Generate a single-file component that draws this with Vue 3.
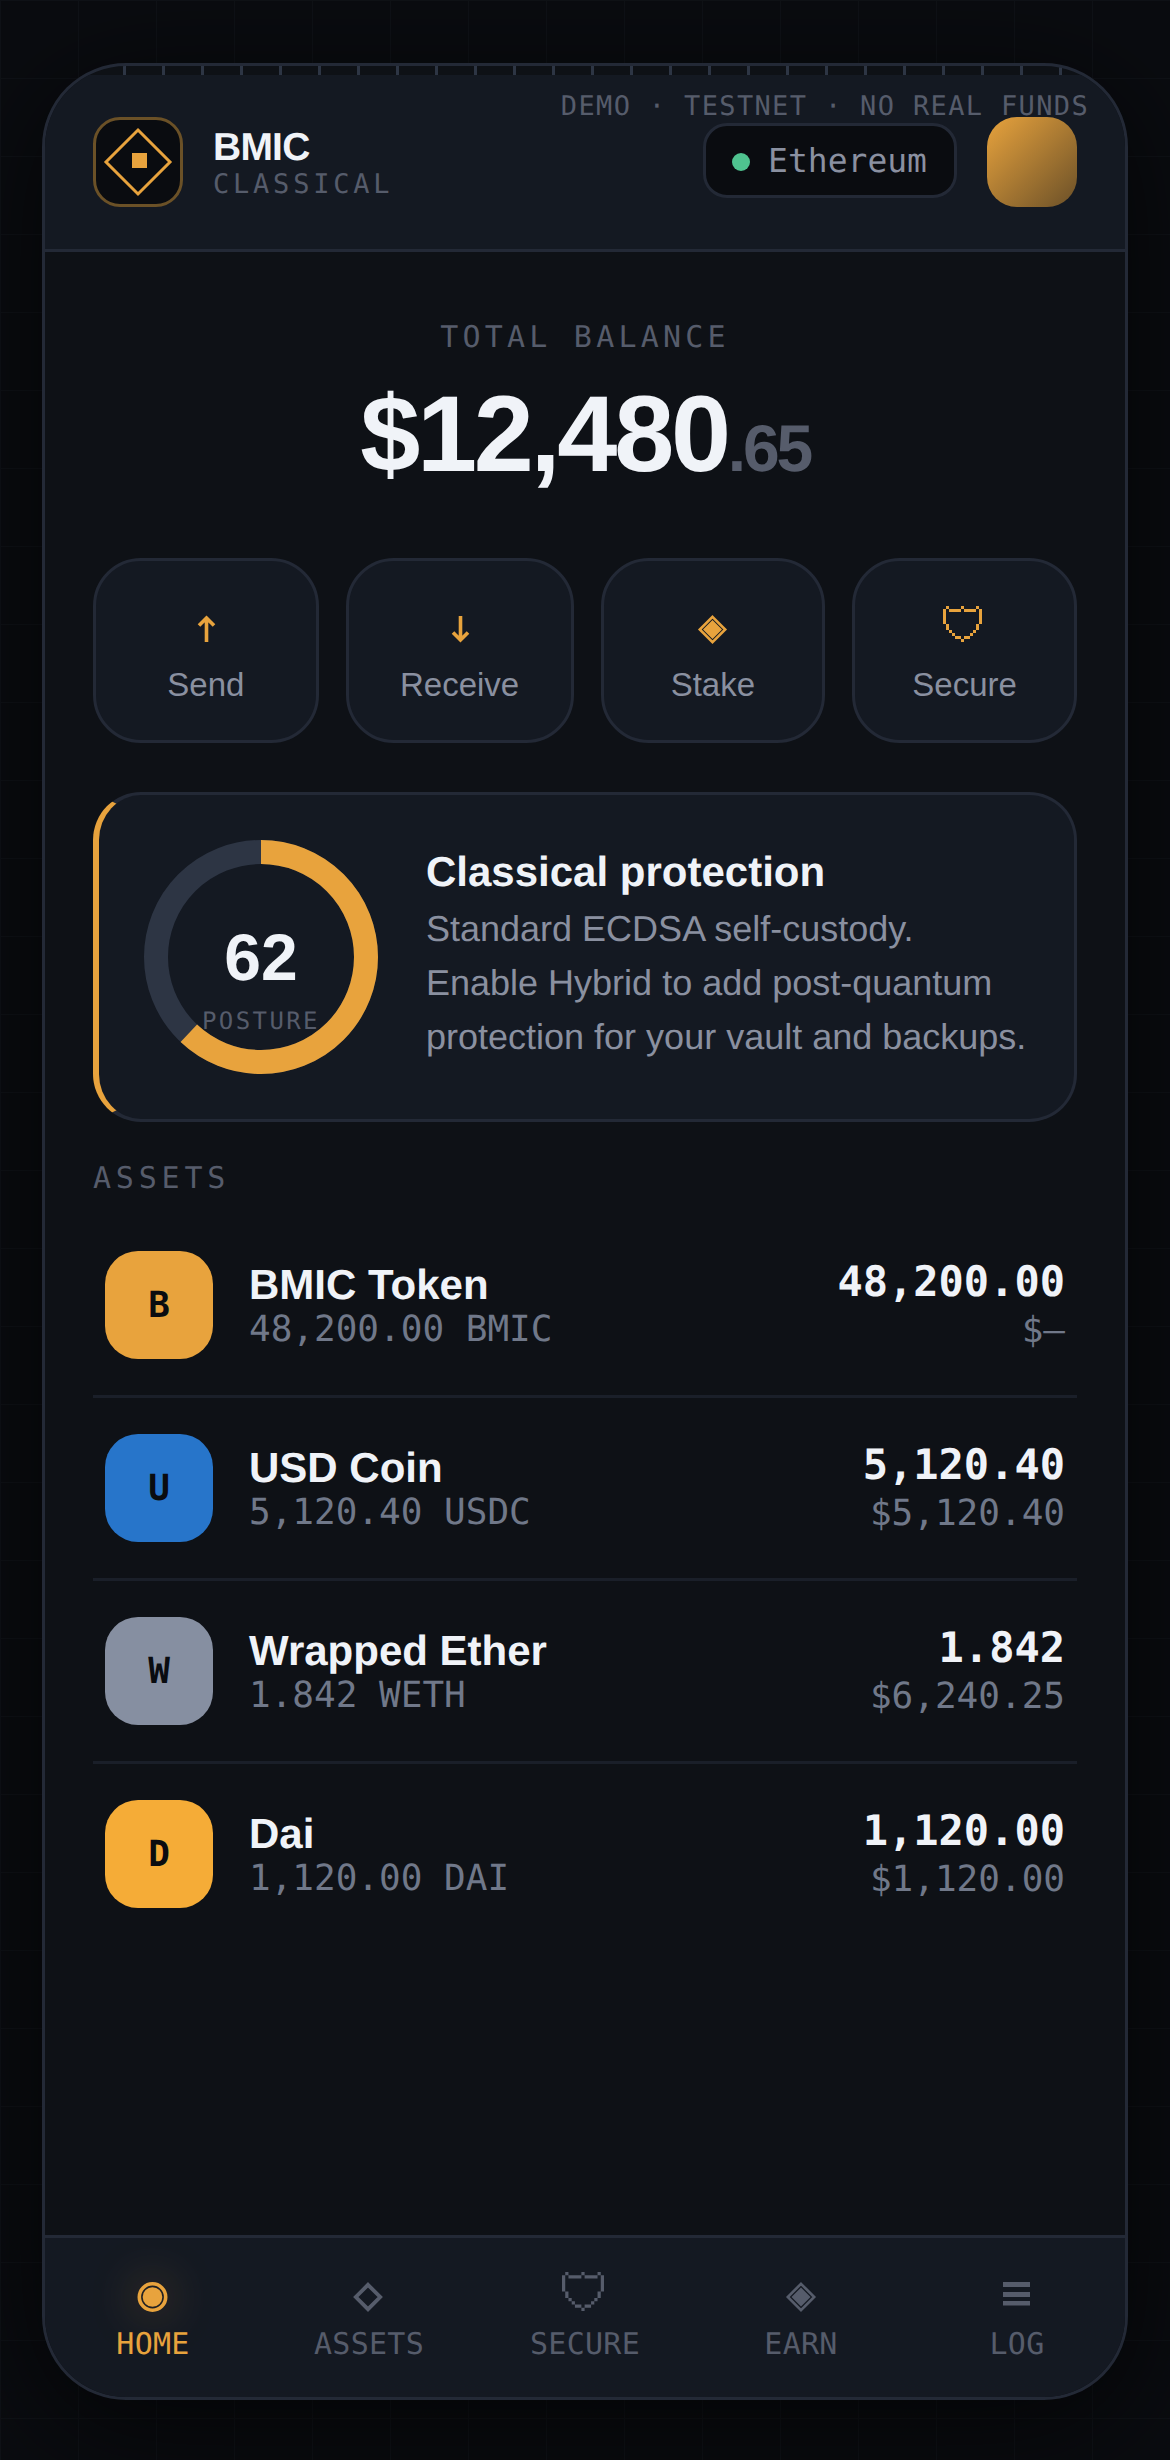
<script setup>
const actions = [
  { icon: 'up', label: 'Send' },
  { icon: 'down', label: 'Receive' },
  { icon: 'stake', label: 'Stake' },
  { icon: 'shield', label: 'Secure' },
]

const assets = [
  { letter: 'B', color: '#e8a33d', name: 'BMIC Token', sub: '48,200.00 BMIC', amount: '48,200.00', usd: '$—' },
  { letter: 'U', color: '#2775ca', name: 'USD Coin', sub: '5,120.40 USDC', amount: '5,120.40', usd: '$5,120.40' },
  { letter: 'W', color: '#868fa1', name: 'Wrapped Ether', sub: '1.842 WETH', amount: '1.842', usd: '$6,240.25' },
  { letter: 'D', color: '#f5ac37', name: 'Dai', sub: '1,120.00 DAI', amount: '1,120.00', usd: '$1,120.00' },
]

const tabs = [
  { icon: 'home', label: 'HOME', active: true },
  { icon: 'assets', label: 'ASSETS' },
  { icon: 'shield', label: 'SECURE' },
  { icon: 'earn', label: 'EARN' },
  { icon: 'log', label: 'LOG' },
]

// shield is a blocky 13x12 shape, so it is drawn on a pixel grid
const shieldPath =
  'M1 0h1v1H1zM6 0h1v1H6zM11 0h1v1h-1zM2 1h4v1H2zM7 1h4v1H7zM0 1h1v5H0zM12 1h1v5h-1z' +
  'M1 6h1v2H1zM11 6h1v2h-1zM2 8h1v1H2zM10 8h1v1h-1zM3 9h1v1H3zM9 9h1v1H9z' +
  'M4 10h2v1H4zM7 10h2v1H7zM6 11h1v1H6z'

const posture = 62
const radius = 105
const circumference = 2 * Math.PI * radius
</script>

<template>
  <div class="page">
    <div class="device">
      <div class="ticks"></div>
      <span class="demo">DEMO · TESTNET · NO REAL FUNDS</span>

      <header class="header">
        <div class="logo">
          <svg width="84" height="84" viewBox="0 0 84 84">
            <path d="M42 10 L74 42 L42 74 L10 42 Z" fill="none" stroke="#e8a33d" stroke-width="3" />
            <rect x="36" y="33" width="15" height="15" fill="#e8a33d" />
          </svg>
        </div>
        <div class="brand">
          <div class="brand-name">BMIC</div>
          <div class="brand-mode">CLASSICAL</div>
        </div>
        <div class="network"><i class="dot"></i>Ethereum</div>
        <div class="avatar"></div>
      </header>

      <main class="main">
        <section class="balance">
          <div class="balance-label">TOTAL BALANCE</div>
          <div class="balance-value">$12,480<span class="cents">.65</span></div>
        </section>

        <section class="actions">
          <button v-for="a in actions" :key="a.label" class="action">
            <svg class="action-icon" width="48" height="48" viewBox="0 0 48 48">
              <path v-if="a.icon === 'up'" d="M24.5 42V18M17 25.5L24.5 18L32 25.5" fill="none" stroke="#e8a33d" stroke-width="3.6" />
              <path v-else-if="a.icon === 'down'" d="M24.5 16V40M17 32.5L24.5 40L32 32.5" fill="none" stroke="#e8a33d" stroke-width="3.6" />
              <g v-else-if="a.icon === 'stake'">
                <path d="M23.5 16.8L36.2 29.5L23.5 42.2L10.8 29.5Z" fill="none" stroke="#e8a33d" stroke-width="2.6" />
                <path d="M23.5 20L33 29.5L23.5 39L14 29.5Z" fill="#e8a33d" />
              </g>
              <path v-else :d="shieldPath" transform="translate(2 6) scale(3)" fill="#e8a33d" shape-rendering="crispEdges" />
            </svg>
            <span class="action-label">{{ a.label }}</span>
          </button>
        </section>

        <section class="card">
          <div class="ring">
            <svg width="234" height="234" viewBox="0 0 234 234">
              <circle cx="117" cy="117" :r="radius" fill="none" stroke="#2d3544" stroke-width="24" />
              <circle
                cx="117"
                cy="117"
                :r="radius"
                fill="none"
                stroke="#e8a33d"
                stroke-width="24"
                :stroke-dasharray="`${circumference * posture / 100} ${circumference}`"
                transform="rotate(-90 117 117)"
              />
            </svg>
            <span class="ring-num">{{ posture }}</span>
            <span class="ring-label">POSTURE</span>
          </div>
          <div class="card-text">
            <h3>Classical protection</h3>
            <p>Standard ECDSA self-custody. Enable Hybrid to add post-quantum protection for your vault and backups.</p>
          </div>
        </section>

        <div class="section-title">ASSETS</div>

        <div class="list">
          <div v-for="t in assets" :key="t.letter" class="row">
            <div class="token" :style="{ background: t.color }">{{ t.letter }}</div>
            <div class="row-left">
              <div class="row-name">{{ t.name }}</div>
              <div class="row-sub">{{ t.sub }}</div>
            </div>
            <div class="row-right">
              <div class="row-amount">{{ t.amount }}</div>
              <div class="row-sub">{{ t.usd }}</div>
            </div>
          </div>
        </div>
      </main>

      <nav class="nav">
        <div v-for="t in tabs" :key="t.label" class="tab" :class="{ active: t.active }">
          <svg class="tab-icon" width="54" height="54" viewBox="0 0 54 54">
            <g v-if="t.icon === 'home'" fill="currentColor">
              <circle cx="26.5" cy="27" r="13.2" fill="none" stroke="currentColor" stroke-width="3.6" />
              <circle cx="26.5" cy="27" r="9.8" />
            </g>
            <path v-else-if="t.icon === 'assets'" d="M26 14.8L38.2 27L26 39.2L13.8 27Z" fill="none" stroke="currentColor" stroke-width="3.8" />
            <path v-else-if="t.icon === 'shield'" :d="shieldPath" transform="translate(4 2) scale(3.23 3.25)" fill="currentColor" />
            <g v-else-if="t.icon === 'earn'" fill="currentColor">
              <path d="M27 13.8L40.2 27L27 40.2L13.8 27Z" fill="none" stroke="currentColor" stroke-width="2.6" />
              <path d="M27 17.5L36.5 27L27 36.5L17.5 27Z" />
            </g>
            <g v-else fill="currentColor">
              <rect x="13" y="12" width="27" height="5" />
              <rect x="13" y="22" width="27" height="5" />
              <rect x="13" y="31" width="27" height="4.5" />
            </g>
          </svg>
          <span class="tab-label">{{ t.label }}</span>
        </div>
      </nav>
    </div>
  </div>
</template>

<style>
html,
body {
  background: #0a0c10;
}
</style>

<style scoped>
.page {
  width: 1170px;
  height: 2460px;
  box-sizing: border-box;
  padding: 63px 42px 0;
  background-color: #0a0c10;
  background-image:
    linear-gradient(#0f1217 1px, transparent 1px),
    linear-gradient(90deg, #0f1217 1px, transparent 1px);
  background-size: 78px 78px;
  font-family: "Liberation Sans", Arial, sans-serif;
  text-rendering: geometricPrecision;
  color: #f0f3f8;
}

.device {
  position: relative;
  width: 1086px;
  height: 2337px;
  box-sizing: border-box;
  display: flex;
  flex-direction: column;
  border: 3px solid #232936;
  border-radius: 84px;
  background: #0e1116;
  overflow: hidden;
  box-shadow: 0 24px 120px rgba(0, 0, 0, 0.7);
}

.ticks {
  height: 9px;
  flex: none;
  background: repeating-linear-gradient(90deg, #2d3544 0 3px, transparent 3px 39px);
}

.demo {
  position: absolute;
  top: 22.5px;
  right: 36px;
  font: 27px/36px "DejaVu Sans Mono", monospace;
  letter-spacing: 0.05em;
  color: #565c6b;
}

.header {
  flex: none;
  display: flex;
  align-items: center;
  padding: 42px 48px;
  background: #141922;
  border-bottom: 3px solid #232936;
}

.logo {
  width: 90px;
  height: 90px;
  box-sizing: border-box;
  display: flex;
  align-items: center;
  justify-content: center;
  border: 3px solid #6b5127;
  border-radius: 27px;
  background: #0a0c10;
}

.brand {
  margin-left: 30px;
  padding-top: 3px;
  flex: 1;
}

.brand-name {
  font-size: 39px;
  line-height: 42px;
  font-weight: 700;
  letter-spacing: -0.02em;
}

.brand-mode {
  margin-top: -1px;
  font: 27px/33px "DejaVu Sans Mono", monospace;
  letter-spacing: 0.14em;
  color: #565c6b;
}

.network {
  display: flex;
  align-items: center;
  gap: 18px;
  height: 75px;
  box-sizing: border-box;
  padding: 0 27px 0 26px;
  margin-top: -3px;
  border: 3px solid #232936;
  border-radius: 24px;
  background: #0a0c10;
  font: 33px "DejaVu Sans Mono", monospace;
  color: #8a90a0;
}

.dot {
  width: 18px;
  height: 18px;
  margin-top: 3px;
  border-radius: 50%;
  background: #4fc38f;
}

.avatar {
  width: 90px;
  height: 90px;
  margin-left: 30px;
  border-radius: 30px;
  background: linear-gradient(135deg, #e8a33d, #6b5028);
}

.main {
  flex: 1;
  padding: 0 48px;
}

.balance {
  padding-top: 68px;
  text-align: center;
}

.balance-label {
  font: 30px/36px "DejaVu Sans Mono", monospace;
  letter-spacing: 0.14em;
  color: #565c6b;
}

.balance-value {
  margin-top: 18px;
  font-size: 108px;
  line-height: 120px;
  font-weight: 700;
  letter-spacing: -0.03em;
}

.cents {
  font-size: 66px;
  line-height: 0;
  color: #565c6b;
}

.actions {
  margin-top: 64px;
  display: grid;
  grid-template-columns: 225fr 227fr 224fr 224fr;
  gap: 27px;
}

.action {
  height: 185px;
  box-sizing: border-box;
  display: flex;
  flex-direction: column;
  align-items: center;
  padding: 39px 0 0;
  border: 3px solid #232936;
  border-radius: 48px;
  background: #141922;
  font-family: inherit;
}

.action-icon {
  display: block;
  flex: none;
}

.action-label {
  margin-top: 17px;
  font-size: 33px;
  line-height: 39px;
  color: #8a90a0;
}

.card {
  margin-top: 49px;
  display: flex;
  align-items: center;
  gap: 48px;
  padding: 45px 42px 45px 45px;
  border: 3px solid #232936;
  border-left: 6px solid #e8a33d;
  border-radius: 48px;
  background: #141922;
}

.ring {
  position: relative;
  flex: none;
  width: 234px;
  height: 234px;
}

.ring svg {
  display: block;
}

.ring-num {
  position: absolute;
  left: 0;
  right: 0;
  top: 78px;
  text-align: center;
  font-size: 66px;
  line-height: 78px;
  font-weight: 700;
}

.ring-label {
  position: absolute;
  left: 0;
  right: 0;
  top: 166px;
  text-align: center;
  font: 24px/30px "DejaVu Sans Mono", monospace;
  letter-spacing: 0.1em;
  color: #565c6b;
}

.card-text {
  padding-bottom: 3px;
}

.card-text h3 {
  margin: 0 0 6px;
  font-size: 42px;
  line-height: 48px;
  font-weight: 700;
}

.card-text p {
  margin: 0;
  font-size: 36px;
  line-height: 54px;
  color: #8a90a0;
}

.section-title {
  margin-top: 36px;
  font: 30px/42px "DejaVu Sans Mono", monospace;
  letter-spacing: 0.16em;
  color: #565c6b;
}

.list {
  margin-top: 15px;
}

.row {
  display: flex;
  align-items: center;
  gap: 36px;
  padding: 36px 12px;
  border-bottom: 3px solid #1a1f29;
}

.row:last-child {
  border-bottom: none;
}

.token {
  flex: none;
  width: 108px;
  height: 108px;
  display: flex;
  align-items: center;
  justify-content: center;
  border-radius: 33px;
  font: 700 36px "DejaVu Sans Mono", monospace;
  color: #0a0c10;
}

.row-left {
  flex: 1;
  padding-top: 2px;
}

.row-right {
  text-align: right;
}

.row-name {
  font-size: 42px;
  line-height: 48px;
  font-weight: 700;
}

.row-amount {
  margin-bottom: 4px;
  font: 700 42px/48px "DejaVu Sans Mono", monospace;
}

.row-sub {
  font: 36px/42px "DejaVu Sans Mono", monospace;
  color: #707889;
}

.nav {
  flex: none;
  height: 162px;
  box-sizing: border-box;
  display: grid;
  grid-template-columns: repeat(5, 1fr);
  border-top: 3px solid #232936;
  background: #141922;
}

.tab {
  display: flex;
  flex-direction: column;
  align-items: center;
  padding-top: 32px;
  color: #565c6b;
}

.tab-icon {
  display: block;
  flex: none;
}

.tab-label {
  margin-top: 3px;
  font: 30px/36px "DejaVu Sans Mono", monospace;
  letter-spacing: 0.01em;
}

.tab.active {
  color: #e8a33d;
}

.tab.active .tab-icon {
  filter: drop-shadow(0 0 24px rgba(232, 163, 61, 0.4));
}
</style>
